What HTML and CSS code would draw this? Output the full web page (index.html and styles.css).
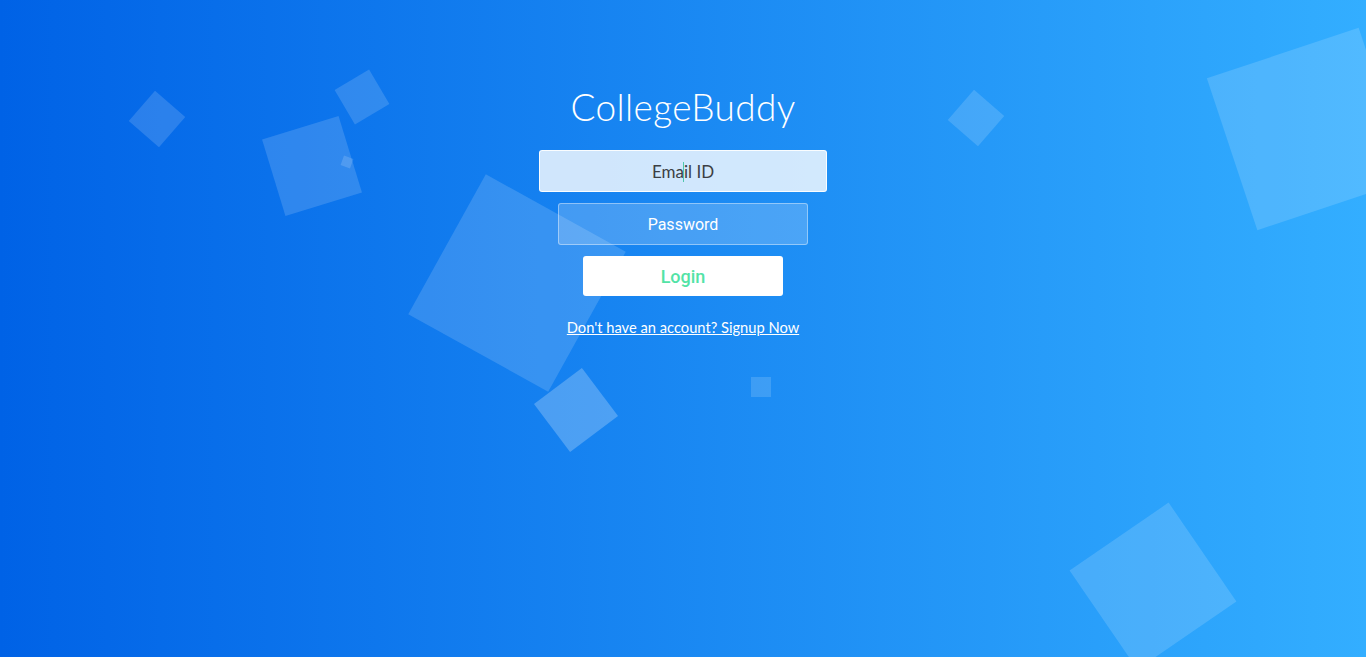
FILE: index.html
```html
<!DOCTYPE html>
<html lang="en">
<head>
<meta charset="utf-8">
<title>CollegeBuddy</title>
<link rel="stylesheet" href="styles.css">
</head>
<body>
<div class="wrapper">
  <div class="container">
    <h1 class="title">CollegeBuddy</h1>
    <form class="form">
      <div class="field field-focus">
        <input class="input input-email" type="text" placeholder="Email ID">
      </div>
      <input class="input input-pass" type="password" placeholder="Password">
      <button class="btn-login" type="button">Login</button>
    </form>
    <a class="signup" href="#">Don't have an account? Signup Now</a>
  </div>
  <ul class="bubbles">
    <li class="b b1"></li>
    <li class="b b2"></li>
    <li class="b b3"></li>
    <li class="b b4"></li>
    <li class="b b5"></li>
    <li class="b b6"></li>
    <li class="b b7"></li>
    <li class="b b8"></li>
    <li class="b b9"></li>
    <li class="b b10"></li>
  </ul>
</div>
</body>
</html>
```
FILE: styles.css
```css
* { box-sizing: border-box; }
html, body { margin: 0; padding: 0; height: 100%; }
body { font-family: "Lato", "Open Sans", sans-serif; }

.wrapper {
  position: relative;
  width: 100%;
  height: 657px;
  overflow: hidden;
  background: linear-gradient(to right, #0062e6 0%, #33aeff 100%);
}

.container {
  position: relative;
  z-index: 2;
  display: flex;
  flex-direction: column;
  align-items: center;
  padding-top: 80px;
}

.title {
  margin: 0 0 16px 0;
  font-family: "Lato", sans-serif;
  font-weight: 300;
  font-size: 37px;
  line-height: 54px;
  color: #fff;
  letter-spacing: 0.35px;
}

.form {
  display: flex;
  flex-direction: column;
  align-items: center;
  gap: 11px;
  margin: 0;
}

.field { position: relative; }
.field-focus::after {
  content: "";
  position: absolute;
  left: 50%;
  top: 12px;
  width: 1px;
  height: 20px;
  background: #4fc7ad;
}

.input {
  display: block;
  appearance: none;
  outline: 0;
  height: 42px;
  border-radius: 3px;
  text-align: center;
  padding: 0 15px;
  margin: 0;
}

.input-email {
  width: 288px;
  background: rgba(255, 255, 255, 0.8);
  border: 1px solid rgba(255, 255, 255, 0.9);
  font-family: "Lato", sans-serif;
  font-size: 17px;
  color: #333;
}
.input-email::placeholder { color: #3c3f44; }

.input-pass {
  width: 250px;
  background: rgba(255, 255, 255, 0.2);
  border: 1px solid rgba(255, 255, 255, 0.4);
  font-family: "Roboto", Arial, sans-serif;
  font-size: 16px;
  color: #fff;
}
.input-pass::placeholder { color: #fff; }

.btn-login {
  appearance: none;
  width: 200px;
  height: 40px;
  border: 0;
  border-radius: 3px;
  background: #fff;
  color: #53e3a6;
  font-family: "Roboto", Arial, sans-serif;
  font-weight: 500;
  font-size: 18px;
  cursor: pointer;
}

.signup {
  margin-top: 22px;
  font-family: "Lato", sans-serif;
  font-size: 14.7px;
  color: #fff;
  text-decoration: underline;
}

.bubbles {
  position: absolute;
  inset: 0;
  margin: 0;
  padding: 0;
  list-style: none;
  z-index: 1;
}
.b {
  position: absolute;
  background: rgba(255, 255, 255, 0.15);
}
.b1 { left: 137px; top: 99px; width: 40px; height: 40px; transform: rotate(41deg); }
.b2 { left: 342px; top: 77px; width: 40px; height: 40px; transform: rotate(59.5deg); }
.b3 { left: 272px; top: 126px; width: 80px; height: 80px; transform: rotate(-17deg); }
.b4 { left: 342px; top: 157px; width: 10px; height: 10px; transform: rotate(20deg); }
.b5 { left: 437px; top: 203px; width: 160px; height: 160px; transform: rotate(29deg); }
.b6 { left: 546px; top: 380px; width: 60px; height: 60px; transform: rotate(53deg); background: rgba(255, 255, 255, 0.24); }
.b7 { left: 956px; top: 98px; width: 40px; height: 40px; transform: rotate(41deg); }
.b8 { left: 751px; top: 377px; width: 20px; height: 20px; }
.b9 { left: 1228px; top: 49px; width: 160px; height: 160px; transform: rotate(-18.4deg); }
.b10 { left: 1093px; top: 526px; width: 120px; height: 120px; transform: rotate(-34.4deg); }
```
